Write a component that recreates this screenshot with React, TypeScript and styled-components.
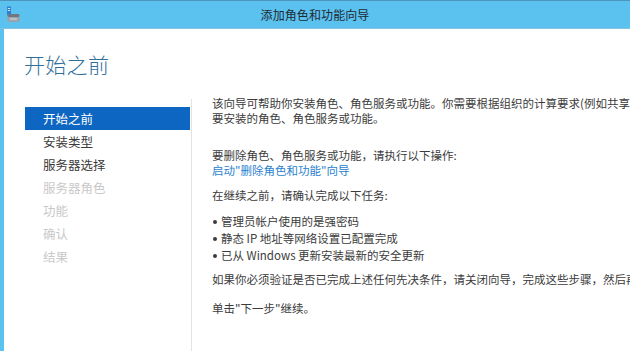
import React from 'react';
import styled, { createGlobalStyle } from 'styled-components';

const GlobalStyle = createGlobalStyle`
  html, body {
    margin: 0;
    padding: 0;
    overflow: hidden;
    background: #ffffff;
  }
  body {
    font-family: "Noto Sans CJK SC", "Noto Sans", sans-serif;
  }
`;

// Window frame
const Window = styled.div`
  width: 630px;
  height: 351px;
  display: flex;
  flex-direction: column;
  background-color: #5bc1ef;
  border-top: 1px solid #4e93bb;
  box-sizing: border-box;
  overflow: hidden;
`;

const TitleBar = styled.div`
  height: 28px;
  flex-shrink: 0;
  display: grid;
  grid-template-columns: 1fr auto 1fr;
  align-items: center;
  border-bottom: 1px solid #86c2e2;
  box-sizing: border-box;
`;

const AppIcon = styled.div`
  padding-left: 6px;
  display: flex;
  align-items: center;
`;

const WindowTitle = styled.div`
  font-size: 12px;
  color: #1f2a33;
  letter-spacing: 0.1px;
  margin-top: -1px;
`;

const Client = styled.div`
  flex: 1;
  margin-left: 4px;
  background: #ffffff;
  display: flex;
  flex-direction: column;
  min-height: 0;
`;

const Heading = styled.h1`
  margin: 22px 0 0 20px;
  font-size: 21px;
  line-height: 26px;
  font-weight: 300;
  color: #2f6f9c;
  letter-spacing: 0.3px;
`;

const Main = styled.div`
  flex: 1;
  display: flex;
  margin-top: 19px;
  min-height: 0;
`;

const Sidebar = styled.nav`
  width: 188px;
  flex-shrink: 0;
  padding: 8px 0 0 21px;
  box-sizing: border-box;
  border-right: 1px solid #e3e3e3;
  margin-top: 3px;
`;

const NavItem = styled.div<{ $state: 'active' | 'normal' | 'disabled' }>`
  width: 165px;
  height: 23px;
  line-height: 23px;
  padding-left: 18px;
  box-sizing: border-box;
  font-size: 12.5px;
  background: ${(p) => (p.$state === 'active' ? '#0d66c1' : 'transparent')};
  color: ${(p) =>
    p.$state === 'active' ? '#ffffff' : p.$state === 'disabled' ? '#c9c9c9' : '#3a3a3a'};
`;

const Content = styled.div`
  flex: 1;
  padding-left: 20px;
  font-size: 11.5px;
  line-height: 15px;
  color: #3b3b3b;
  white-space: nowrap;
  overflow: hidden;
`;

const Para = styled.p<{ $gap?: number }>`
  margin: ${(p) => p.$gap ?? 0}px 0 0 0;
`;

const Link = styled.span`
  color: #2a82cf;
`;

const List = styled.ul`
  list-style: none;
  margin: 10px 0 0 0;
  padding: 0;
  line-height: 17px;
`;

const ListItem = styled.li`
  display: flex;
  align-items: center;
  gap: 4px;
`;

const Bullet = styled.span`
  width: 4px;
  height: 4px;
  border-radius: 50%;
  background: #3b3b3b;
  flex-shrink: 0;
  margin-left: 1px;
`;

const steps: { label: string; state: 'active' | 'normal' | 'disabled' }[] = [
  { label: '开始之前', state: 'active' },
  { label: '安装类型', state: 'normal' },
  { label: '服务器选择', state: 'normal' },
  { label: '服务器角色', state: 'disabled' },
  { label: '功能', state: 'disabled' },
  { label: '确认', state: 'disabled' },
  { label: '结果', state: 'disabled' },
];

const tasks = ['管理员帐户使用的是强密码', '静态 IP 地址等网络设置已配置完成', '已从 Windows 更新安装最新的安全更新'];

const ServerIcon = () => (
  <svg width="14" height="17" viewBox="0 0 14 17">
    <rect x="1" y="0.5" width="4" height="9" fill="#2d7fd0" />
    <rect x="1.8" y="2" width="2.4" height="0.8" fill="#ffffff" />
    <rect x="1.8" y="4" width="2.4" height="0.8" fill="#ffffff" />
    <rect x="1.5" y="8" width="12" height="8" rx="1.5" fill="#9aa3ab" />
    <rect x="1.5" y="8" width="12" height="3" rx="1.5" fill="#6f7880" />
    <rect x="4" y="12.5" width="7" height="1" fill="#d7dce0" />
  </svg>
);

const App = () => {
  return (
    <>
      <GlobalStyle />
      <Window>
        <TitleBar>
          <AppIcon>
            <ServerIcon />
          </AppIcon>
          <WindowTitle>添加角色和功能向导</WindowTitle>
          <div />
        </TitleBar>
        <Client>
          <Heading>开始之前</Heading>
          <Main>
            <Sidebar>
              {steps.map((s) => (
                <NavItem key={s.label} $state={s.state}>
                  {s.label}
                </NavItem>
              ))}
            </Sidebar>
            <Content>
              <Para>
                该向导可帮助你安装角色、角色服务或功能。你需要根据组织的计算要求(例如共享文档或托管网站)确定
                <br />
                要安装的角色、角色服务或功能。
              </Para>
              <Para $gap={22}>
                要删除角色、角色服务或功能，请执行以下操作:
                <br />
                <Link>启动"删除角色和功能"向导</Link>
              </Para>
              <Para $gap={10}>在继续之前，请确认完成以下任务:</Para>
              <List>
                {tasks.map((t) => (
                  <ListItem key={t}>
                    <Bullet />
                    <span>{t}</span>
                  </ListItem>
                ))}
              </List>
              <Para $gap={8}>
                如果你必须验证是否已完成上述任何先决条件，请关闭向导，完成这些步骤，然后再次运行向导。
              </Para>
              <Para $gap={14}>单击"下一步"继续。</Para>
            </Content>
          </Main>
        </Client>
      </Window>
    </>
  );
};

export default App;
